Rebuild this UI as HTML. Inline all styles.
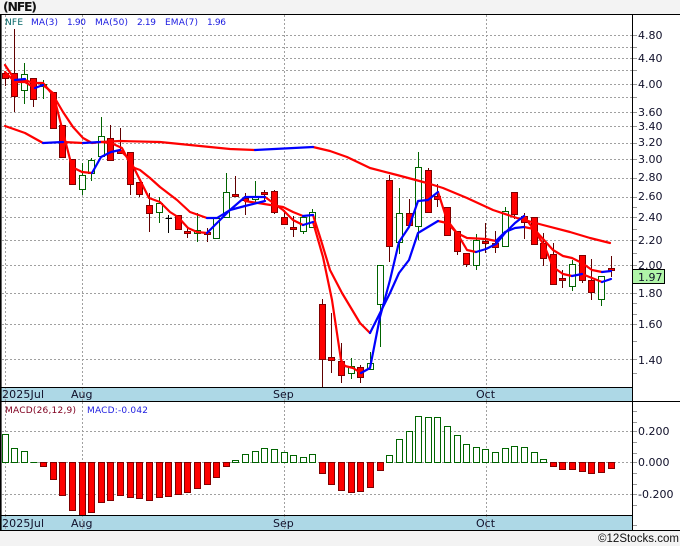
<!DOCTYPE html>
<html><head><meta charset="utf-8"><title>NFE chart</title>
<style>
html,body{margin:0;padding:0;background:#f3f3f3}
svg{display:block}
text{font-family:"DejaVu Sans",sans-serif}
</style></head>
<body>
<svg width="680" height="546" viewBox="0 0 680 546" xmlns="http://www.w3.org/2000/svg">
<rect width="680" height="546" fill="#f3f3f3"/>
<rect x="0" y="14" width="680" height="516" fill="#fff"/>
<text x="3" y="11" font-size="12.5" font-weight="bold" fill="#111" textLength="34">(NFE)</text>

<!-- grid -->
<g stroke="#a0a0a0" stroke-width="1" stroke-dasharray="2 2" fill="none">
<path d="M2 35.5H632M2 47.5H632M2 58.5H632M2 70.5H632M2 84.5H632M2 97.5H632M2 112.5H632M2 126.5H632M2 143.5H632M2 159.5H632M2 178.5H632M2 197.5H632M2 217.5H632M2 240.5H632M2 265.5H632M2 293.5H632M2 324.5H632M2 359.5H632"/>
<path d="M2 431.5H632M2 462.5H632M2 494.5H632"/>
<path d="M5.5 15V387M82.5 15V387M284.5 15V387M486.5 15V387M5.5 402V515M82.5 402V515M284.5 402V515M486.5 402V515"/>
</g>

<!-- wicks -->
<path fill="none" stroke="#600000" stroke-width="1" d="M5.5 73V86M14.5 29V112M33.5 78V107M53.5 92V129M62.5 125V158M72.5 159V185M110.5 125V161M120.5 128V154M130.5 152V195M139.5 182V197M149.5 193V232M178.5 215V230M187.5 227V238M207.5 228V242M235.5 176V196M245.5 193V215M264.5 190V200M274.5 190V214M284.5 210V224M293.5 216V237M322.5 299V388M331.5 313V373M341.5 343V383M360.5 365V383M389.5 175V262M409.5 199V225M428.5 168V213M437.5 184V207M447.5 207V236M457.5 231V255M466.5 253V267M485.5 223V253M495.5 231V253M514.5 192V219M524.5 213V239M534.5 217V245M543.5 233V266M553.5 243V285M562.5 270V288M582.5 255V283M591.5 259V300M611.5 256V277"/>
<path fill="none" stroke="#006400" stroke-width="1" d="M24.5 63V104M43.5 80V99M82.5 163V195M91.5 158V181M101.5 117V156M159.5 197V223M197.5 213V242M216.5 218V239M226.5 173V217M255.5 181V203M303.5 217V234M312.5 209V227M351.5 358V379M370.5 352V369M380.5 265V347M399.5 188V254M418.5 152V240M476.5 234V270M505.5 207V246M572.5 260V291M601.5 276V306"/>
<path fill="none" stroke="#000" stroke-width="1" d="M168.5 215V233M165.5 218.5H172"/>

<!-- red bodies -->
<path fill="#f00" stroke="#800000" stroke-width="1" d="M2.5 73.5h6v5h-6zM11.5 73.5h6v23h-6zM30.5 78.5h6v21h-6zM50.5 92.5h6v36h-6zM59.5 125.5h6v32h-6zM69.5 159.5h6v25h-6zM107.5 138.5h6v22h-6zM117.5 150.5h6v3h-6zM127.5 152.5h6v32h-6zM136.5 182.5h6v12h-6zM146.5 205.5h6v8h-6zM175.5 215.5h6v14h-6zM184.5 231.5h6v2h-6zM204.5 232.5h6v2h-6zM232.5 194.5h6v2h-6zM242.5 198.5h6v2h-6zM261.5 192.5h6v2h-6zM271.5 191.5h6v21h-6zM281.5 217.5h6v7h-6zM290.5 227.5h6v2h-6zM319.5 304.5h6v55h-6zM328.5 357.5h6v3h-6zM338.5 361.5h6v14h-6zM357.5 367.5h6v10h-6zM386.5 180.5h6v66h-6zM406.5 213.5h6v12h-6zM425.5 170.5h6v42h-6zM434.5 196.5h6v3h-6zM444.5 207.5h6v28h-6zM454.5 231.5h6v20h-6zM463.5 253.5h6v11h-6zM482.5 241.5h6v2h-6zM492.5 243.5h6v4h-6zM511.5 192.5h6v22h-6zM521.5 216.5h6v6h-6zM531.5 217.5h6v27h-6zM540.5 243.5h6v15h-6zM550.5 254.5h6v30h-6zM559.5 278.5h6v2h-6zM579.5 255.5h6v25h-6zM588.5 280.5h6v12h-6zM608.5 268.5h6v2h-6z"/>
<!-- green bodies -->
<path fill="#fff" stroke="#006400" stroke-width="1" d="M21.5 74.5h6v16h-6zM40.5 84.5h6v2h-6zM79.5 175.5h6v14h-6zM88.5 160.5h6v13h-6zM98.5 136.5h6v20h-6zM156.5 203.5h6v9h-6zM194.5 230.5h6v3h-6zM213.5 218.5h6v20h-6zM223.5 192.5h6v25h-6zM252.5 196.5h6v3h-6zM300.5 217.5h6v14h-6zM309.5 212.5h6v15h-6zM348.5 366.5h6v7h-6zM367.5 363.5h6v6h-6zM377.5 265.5h6v39h-6zM396.5 213.5h6v29h-6zM415.5 167.5h6v59h-6zM473.5 240.5h6v25h-6zM502.5 211.5h6v35h-6zM569.5 264.5h6v22h-6zM598.5 276.5h6v23h-6z"/>

<!-- moving averages -->
<g fill="none" stroke-width="2.2" stroke-linejoin="round" stroke-linecap="round">
<g stroke="#ff0000">
<polyline points="5,126 25,133 43,143"/>
<polyline points="63,142 83,143"/>
<polyline points="100,142 120,141 160,142 200,146 230,149 255,150"/>
<polyline points="313,147 330,151 347,157 370,168 397,175 427,183 443,188 467,198 493,210 517,218 543,225 570,232 590,238 610,243"/>
<polyline points="5,65 15,80 25,80 33,83 43,83 53,95 63,112 73,127 83,138 92,143 101,142 111,143 122,148 132,167 140,170 150,178 160,187 177,200 190,212 207,218"/>
<polyline points="245,201 283,207 293,212 303,216"/>
<polyline points="313,215 320,237 330,270 342,293 360,323 370,333"/>
<polyline points="438,221 447,223 457,233 467,238 486,239 496,241"/>
<polyline points="524,227 534,229 544,240 553,250 563,256 572,258 582,263 592,270 602,272"/>
<polyline points="5,72 15,82 25,82 35,88"/>
<polyline points="43,85 53,93 63,132 72,167 82,172 92,173"/>
<polyline points="120,150 130,160 140,180 149,198 160,202 170,212 178,217 188,228 197,232 207,233"/>
<polyline points="265,197 283,210 293,220 303,225"/>
<polyline points="313,222 323,257 332,300 341,360 345,366 353,368 361,373"/>
<polyline points="438,192 447,220 457,233 467,250 476,252"/>
<polyline points="524,216 534,230 544,245 553,267 563,274 572,276"/>
<polyline points="582,274 592,278 602,282"/>
</g>
<g stroke="#0000ff">
<polyline points="43,143 63,142"/>
<polyline points="83,143 100,142"/>
<polyline points="255,150 313,147"/>
<polyline points="35,88 43,85"/>
<polyline points="15,80 25,79"/>
<polyline points="92,173 101,157 111,152 120,150"/>
<polyline points="207,233 217,223 230,210 245,197 265,197"/>
<polyline points="207,218 217,218 230,210 245,206 265,201"/>
<polyline points="303,225 313,222"/>
<polyline points="303,216 313,215"/>
<polyline points="361,373 370,368 380,317 390,280 399,242 409,227 418,201 428,200 438,192"/>
<polyline points="370,333 380,313 390,293 399,273 409,260 418,233 428,227 438,221"/>
<polyline points="476,252 486,249 496,244 505,233 515,223 524,216"/>
<polyline points="496,241 505,232 515,228 524,227"/>
<polyline points="572,276 582,274"/>
<polyline points="602,272 611,271"/>
<polyline points="602,282 611,279"/>
</g>
</g>

<!-- MACD bars -->
<path fill="#fff" stroke="#006400" stroke-width="1" d="M2.5 434.5h6v28h-6zM11.5 448.5h6v14h-6zM21.5 451.5h6v11h-6zM30.5 462.5h7M232.5 460.5h6v2h-6zM242.5 454.5h6v8h-6zM252.5 451.5h6v11h-6zM261.5 448.5h6v14h-6zM271.5 449.5h6v13h-6zM281.5 452.5h6v10h-6zM290.5 455.5h6v7h-6zM300.5 457.5h6v5h-6zM309.5 454.5h6v8h-6zM386.5 455.5h6v7h-6zM396.5 439.5h6v23h-6zM406.5 431.5h6v31h-6zM415.5 416.5h6v46h-6zM425.5 417.5h6v45h-6zM434.5 417.5h6v45h-6zM444.5 426.5h6v36h-6zM454.5 435.5h6v27h-6zM463.5 444.5h6v18h-6zM473.5 447.5h6v15h-6zM482.5 449.5h6v13h-6zM492.5 452.5h6v10h-6zM502.5 448.5h6v14h-6zM511.5 446.5h6v16h-6zM521.5 447.5h6v15h-6zM531.5 452.5h6v10h-6zM540.5 459.5h6v3h-6z"/>
<path fill="#f00" stroke="#800000" stroke-width="1" d="M40.5 462.5h6v4h-6zM50.5 462.5h6v17h-6zM59.5 462.5h6v33h-6zM69.5 462.5h6v48h-6zM79.5 462.5h6v53h-6zM88.5 462.5h6v50h-6zM98.5 462.5h6v40h-6zM107.5 462.5h6v38h-6zM117.5 462.5h6v33h-6zM127.5 462.5h6v35h-6zM136.5 462.5h6v36h-6zM146.5 462.5h6v38h-6zM156.5 462.5h6v35h-6zM165.5 462.5h6v34h-6zM175.5 462.5h6v32h-6zM184.5 462.5h6v30h-6zM194.5 462.5h6v26h-6zM204.5 462.5h6v22h-6zM213.5 462.5h6v15h-6zM223.5 462.5h6v4h-6zM319.5 462.5h6v11h-6zM328.5 462.5h6v22h-6zM338.5 462.5h6v28h-6zM348.5 462.5h6v30h-6zM357.5 462.5h6v29h-6zM367.5 462.5h6v25h-6zM377.5 462.5h6v8h-6zM550.5 462.5h6v4h-6zM559.5 462.5h6v7h-6zM569.5 462.5h6v7h-6zM579.5 462.5h6v9h-6zM588.5 462.5h6v11h-6zM598.5 462.5h6v10h-6zM608.5 462.5h6v6h-6z"/>

<!-- date bars -->
<rect x="0" y="387" width="632" height="14" fill="#add8e6"/>
<rect x="0" y="515" width="632" height="15" fill="#add8e6"/>
<path d="M5.5 387V401M82.5 387V401M284.5 387V401M486.5 387V401M5.5 515V530M82.5 515V530M284.5 515V530M486.5 515V530" stroke="#a0a0a0" stroke-dasharray="2 2" fill="none"/>

<!-- frame -->
<g stroke="#000" stroke-width="1" fill="none">
<path d="M0 14.5H680M0 387.5H632M0 401.5H680M0 515.5H632M0 530.5H680M632.5 14V530"/>
</g>
<rect x="0" y="14" width="1.6" height="516" fill="#000"/>

<!-- axis ticks -->
<path stroke="#9a9a9a" stroke-width="1" fill="none" d="M633 35.5h4M633 47.5h4M633 58.5h4M633 70.5h4M633 84.5h4M633 97.5h4M633 112.5h4M633 126.5h4M633 143.5h4M633 159.5h4M633 178.5h4M633 197.5h4M633 207.5h4M633 217.5h4M633 229.5h4M633 240.5h4M633 253.5h4M633 265.5h4M633 293.5h4M633 303.5h4M633 314.5h4M633 324.5h4M633 341.5h4M633 359.5h4M633 373.5h4M633 411.5h4M633 422.5h4M633 431.5h4M633 442.5h4M633 453.5h4M633 462.5h4M633 473.5h4M633 484.5h4M633 494.5h4M633 505.5h4M633 525.5h4"/>

<!-- price axis labels -->
<g font-size="11" fill="#10102a">
<text x="638" y="39">4.80</text>
<text x="638" y="62">4.40</text>
<text x="638" y="88">4.00</text>
<text x="638" y="116">3.60</text>
<text x="638" y="130">3.40</text>
<text x="638" y="146">3.20</text>
<text x="638" y="163">3.00</text>
<text x="638" y="181">2.80</text>
<text x="638" y="200">2.60</text>
<text x="638" y="221">2.40</text>
<text x="638" y="244">2.20</text>
<text x="638" y="269">2.00</text>
<text x="638" y="297">1.80</text>
<text x="638" y="328">1.60</text>
<text x="638" y="364">1.40</text>
<text x="638" y="435">0.200</text>
<text x="638" y="466">0.000</text>
<text x="638" y="498">-0.200</text>
</g>

<!-- price tag -->
<rect x="632.5" y="269.5" width="32" height="14" fill="#b0f5a8" stroke="#000"/>
<text x="638" y="281" font-size="11" fill="#10102a">1.97</text>

<!-- legend -->
<g font-size="9">
<text x="5" y="25" fill="#006464" textLength="18">NFE</text>
<text x="31" y="25" fill="#1a1ae0" textLength="27">MA(3)</text>
<text x="67" y="25" fill="#1a1ae0" textLength="19">1.90</text>
<text x="95" y="25" fill="#1a1ae0" textLength="33">MA(50)</text>
<text x="137" y="25" fill="#1a1ae0" textLength="19">2.19</text>
<text x="165" y="25" fill="#1a1ae0" textLength="33">EMA(7)</text>
<text x="207" y="25" fill="#1a1ae0" textLength="19">1.96</text>
<text x="5" y="413" fill="#800020" textLength="71">MACD(26,12,9)</text>
<text x="87" y="413" fill="#2020e0" textLength="61">MACD:-0.042</text>
</g>

<!-- dates -->
<g font-size="11" fill="#10102a">
<text x="2" y="398" textLength="42">2025Jul</text>
<text x="71" y="398">Aug</text>
<text x="273" y="398">Sep</text>
<text x="476" y="398">Oct</text>
<text x="2" y="527" textLength="42">2025Jul</text>
<text x="71" y="527">Aug</text>
<text x="273" y="527">Sep</text>
<text x="476" y="527">Oct</text>
</g>

<text x="598" y="542" font-size="11.5" fill="#111" style="font-family:'Liberation Sans',sans-serif" textLength="81">©12Stocks.com</text>
</svg>
</body></html>
